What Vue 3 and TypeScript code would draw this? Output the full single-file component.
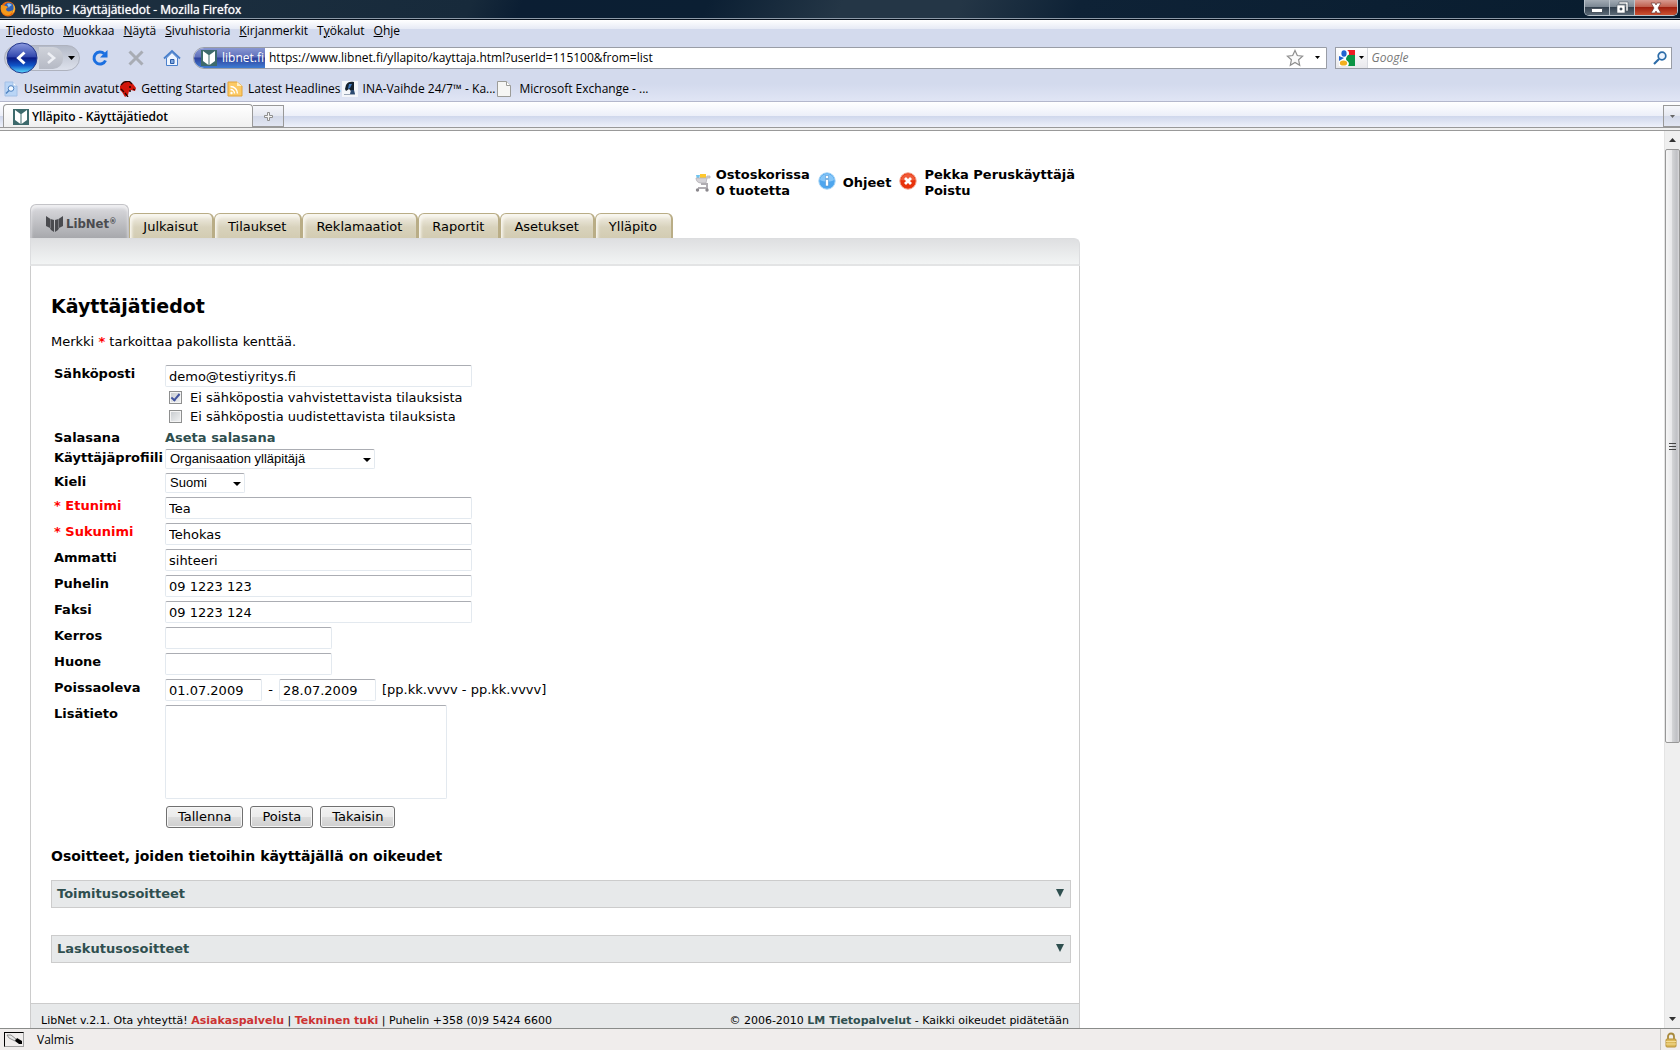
<script setup lang="ts">
import { ref } from 'vue'

interface TextField {
  id: string
  label: string
  value: string
  required?: boolean
  short?: boolean
}

const menus = [
  ['', 'T', 'iedosto'],
  ['', 'M', 'uokkaa'],
  ['', 'N', 'äytä'],
  ['', 'S', 'ivuhistoria'],
  ['', 'K', 'irjanmerkit'],
  ['T', 'y', 'ökalut'],
  ['', 'O', 'hje'],
]

const siteTabs = ['Julkaisut', 'Tilaukset', 'Reklamaatiot', 'Raportit', 'Asetukset', 'Ylläpito']

const url = ref('https://www.libnet.fi/yllapito/kayttaja.html?userId=115100&from=list')
const email = ref('demo@testiyritys.fi')
const noConfirm = ref(true)
const noRenewal = ref(false)
const absentFrom = ref('01.07.2009')
const absentTo = ref('28.07.2009')
const notes = ref('')

const fields = ref<TextField[]>([
  { id: 'etunimi', label: 'Etunimi', value: 'Tea', required: true },
  { id: 'sukunimi', label: 'Sukunimi', value: 'Tehokas', required: true },
  { id: 'ammatti', label: 'Ammatti', value: 'sihteeri' },
  { id: 'puhelin', label: 'Puhelin', value: '09 1223 123' },
  { id: 'faksi', label: 'Faksi', value: '09 1223 124' },
  { id: 'kerros', label: 'Kerros', value: '', short: true },
  { id: 'huone', label: 'Huone', value: '', short: true },
])

const addressGroups = ['Toimitusosoitteet', 'Laskutusosoitteet']
</script>

<template>
  <div class="browser">
    <header class="titlebar">
      <svg class="fox" width="16" height="16" viewBox="0 0 16 16">
        <circle cx="8" cy="8" r="7.4" fill="#e66a10" />
        <circle cx="9" cy="6.8" r="5" fill="#2f5fb4" />
        <path d="M7 3c2-1 4 0 5 1-1 1-3 1-3 3z" fill="#8fc3ee" />
        <path d="M1 4c2 0 3 1 5 1l2 1-2 2c0 3 4 3 7 1-1 4-4 6-7 5C2 13 0 9 1 4z" fill="#f49a1c" />
        <path d="M13 3c3 3 2 8-1 10 2-4 2-7 1-10z" fill="#ffd23e" />
      </svg>
      <span class="caption">Ylläpito - Käyttäjätiedot - Mozilla Firefox</span>
      <div class="winbuttons">
        <button class="win" aria-label="Pienennä">
          <svg width="14" height="14" viewBox="0 0 14 14"><rect x="1.500" y="7.500" width="11" height="4" fill="#fff" stroke="#4b5560" /></svg>
        </button>
        <button class="win" aria-label="Palauta">
          <svg width="14" height="14" viewBox="0 0 14 14">
            <path d="M4 1h9v9h-2V3H4z" fill="#fff" stroke="#4b5560" stroke-width=".6" />
            <path d="M2 4h8v8H2zM5 7v2h2V7z" fill="#fff" fill-rule="evenodd" stroke="#4b5560" stroke-width=".6" />
          </svg>
        </button>
        <button class="win close" aria-label="Sulje">
          <svg width="14" height="14" viewBox="0 0 14 14"><path d="M2 2h4l1 2 1-2h4L9 7l3 5H8l-1-2-1 2H2l3-5z" fill="#fff" stroke="#6b3a36" stroke-width=".7" /></svg>
        </button>
      </div>
    </header>

    <div class="chrome">
      <nav class="menubar">
        <button v-for="m in menus" :key="m[1]">{{ m[0] }}<u>{{ m[1] }}</u>{{ m[2] }}</button>
      </nav>

      <div class="navbar">
        <div class="keyhole">
          <button class="back" aria-label="Takaisin">
            <svg width="32" height="32" viewBox="0 0 32 32">
              <defs>
                <linearGradient id="backFill" x1="0" y1="0" x2="0" y2="1">
                  <stop offset="0" stop-color="#8c9be0" />
                  <stop offset=".45" stop-color="#3349ae" />
                  <stop offset=".5" stop-color="#0a1a85" />
                  <stop offset=".75" stop-color="#0f55c8" />
                  <stop offset="1" stop-color="#5fe0ff" />
                </linearGradient>
              </defs>
              <circle cx="16" cy="16" r="15" fill="url(#backFill)" stroke="#24388c" />
              <path d="M18.500 10.500L12.500 16l6 5.500" fill="none" stroke="#fff" stroke-width="3" />
            </svg>
          </button>
          <button class="forward" aria-label="Seuraava">
            <svg width="24" height="22" viewBox="0 0 24 22"><path d="M9 6l6 5-6 5" fill="none" stroke="#eef0f5" stroke-width="2.600" /></svg>
          </button>
          <svg class="drop" width="7" height="4" viewBox="0 0 7 4"><path d="M0 0h7L3.500 4z" /></svg>
        </div>
        <button class="tool" aria-label="Päivitä">
          <svg width="18" height="18" viewBox="0 0 18 18">
            <path d="M14.500 11.500A6 6 0 1 1 13.200 4.800" fill="none" stroke="#1b6fe0" stroke-width="3" />
            <path d="M16.500 1v7.500H9z" fill="#1b6fe0" />
          </svg>
        </button>
        <button class="tool" aria-label="Pysäytä">
          <svg width="18" height="18" viewBox="0 0 18 18"><path d="M2.500 2.500l13 13M15.500 2.500l-13 13" stroke="#a8acb4" stroke-width="3" /></svg>
        </button>
        <button class="tool home" aria-label="Koti">
          <svg width="18" height="18" viewBox="0 0 18 18">
            <path d="M3.500 9v7.500h11V9L9 3.500z" fill="#eef5ff" stroke="#4a80cc" />
            <path d="M1 9.500l8-7.500 8 7.500" fill="none" stroke="#4a80cc" stroke-width="1.800" />
            <path d="M7.500 14.500v-4h3.500v4z" fill="#7fa8e0" stroke="#2b5ba6" />
          </svg>
        </button>

        <div class="urlbar">
          <button class="identity">
            <svg width="16" height="16" viewBox="0 0 16 16"><rect width="16" height="16" fill="#3d6a6c" /><path d="M2 1l5.500 4v10L2 11zM14 1L8.500 5v10L14 11z" fill="#fff" /></svg>
            <span>libnet.fi</span>
          </button>
          <input v-model="url" class="url" type="text" aria-label="Osoite" />
          <svg width="18" height="18" viewBox="0 0 18 18"><path d="M9 1.500l2.300 5 5.300.6-4 3.700 1.100 5.500L9 13.500l-4.700 2.800 1.100-5.500-4-3.700 5.300-.6z" fill="#fafafa" stroke="#8e8e8e" stroke-width="1.200" /></svg>
          <svg class="urldrop" width="5" height="3" viewBox="0 0 5 3"><path d="M0 0h5L2.500 3z" /></svg>
        </div>

        <div class="searchbar">
          <button class="engine" aria-label="Hakukone">
            <svg width="16" height="16" viewBox="0 0 16 16">
              <rect width="16" height="16" fill="#fff" />
              <path d="M8 0h8v6H9C11 4 10 1 8 0z" fill="#ee1c23" />
              <path d="M9 5h7v11H9c3-4-2-5-2-7 0-1 1-3 2-4z" fill="#0b9444" />
              <ellipse cx="5" cy="3.500" rx="2.600" ry="3.300" fill="#2163d0" />
              <path d="M0 6l5 2-5 3z" fill="#2163d0" />
              <ellipse cx="4.500" cy="13" rx="3.700" ry="2.600" fill="#f2b01e" />
            </svg>
            <svg width="5" height="3" viewBox="0 0 5 3"><path d="M0 0h5L2.500 3z" /></svg>
          </button>
          <input class="search" type="text" placeholder="Google" aria-label="Haku" />
          <svg width="14" height="14" viewBox="0 0 14 14"><circle cx="9" cy="5" r="3.800" fill="#eef5ff" stroke="#2c6ca8" stroke-width="1.700" /><path d="M6 8l-5 5" stroke="#2c6ca8" stroke-width="2.200" /></svg>
        </div>
      </div>

      <nav class="bookmarks">
        <a href="#">
          <svg width="16" height="16" viewBox="0 0 16 16"><path d="M2 1h8l4 4v10H2z" fill="#b9d5f6" stroke="#a3c0e6" /><path d="M10 1v4h4" fill="#fff" stroke="#a3c0e6" /><circle cx="8" cy="7.500" r="2.800" fill="#f4f9ff" stroke="#4e82c0" /><path d="M6 9.500l-3 3" stroke="#4e82c0" stroke-width="1.500" /></svg>
          <span>Useimmin avatut</span>
        </a>
        <a href="#">
          <svg width="16" height="16" viewBox="0 0 16 16"><path d="M0 5l3-4 6-1 4 3 3 4-1 3-4-1-2 1-1 4-3 2-3-5-2-2z" fill="#d3160c" /><path d="M1 4l3-3 5-1 3 3M9 6l2 0M13 8l2 1M5 12l3 4M1 8l3 3M9 10l2 0" fill="none" stroke="#2a0603" stroke-width="1.300" /></svg>
          <span>Getting Started</span>
        </a>
        <a href="#">
          <svg width="16" height="16" viewBox="0 0 16 16"><path d="M1 1h9l5 4v10H1z" fill="#fbc964" stroke="#e2a33a" /><path d="M10 1v4h5" fill="#fff0c8" /><circle cx="4.500" cy="12" r="1.200" fill="#fff" /><path d="M3.500 8.500a4 4 0 0 1 4 4M3.500 5.500a7 7 0 0 1 7 7" fill="none" stroke="#fff" stroke-width="1.400" /></svg>
          <span>Latest Headlines</span>
        </a>
        <a href="#">
          <svg width="16" height="16" viewBox="0 0 16 16"><rect width="16" height="16" fill="#f4f6fa" /><path d="M4 4c1-3 5-4 8-3l0 9h-3l-2-2-3 2-1-2z" fill="#14202e" /><path d="M7 3l3 0-2 4-2 1z" fill="#3e79c0" /><path d="M9 9h3l1 4H8z" fill="#2c4a70" /><path d="M2 13h11v1H2z" fill="#9aa6b6" /></svg>
          <span>INA-Vaihde 24/7™ - Ka...</span>
        </a>
        <a href="#" class="plain">
          <svg width="14" height="16" viewBox="0 0 14 16"><path d="M.5.500h9l4 4v11H.5z" fill="#f6f6f4" stroke="#9c9c98" /><path d="M9.500.500v4h4" fill="#fff" stroke="#9c9c98" /></svg>
          <span>Microsoft Exchange - ...</span>
        </a>
      </nav>
    </div>

    <div class="tabstrip">
      <button class="browsertab">
        <svg width="16" height="16" viewBox="0 0 16 16"><rect width="16" height="16" fill="#3d6a6c" /><path d="M2 1l5.500 4v10L2 11zM14 1L8.500 5v10L14 11z" fill="#fff" /></svg>
        <span>Ylläpito - Käyttäjätiedot</span>
      </button>
      <button class="newtab" aria-label="Uusi välilehti">
        <svg width="9" height="9" viewBox="0 0 9 9"><path d="M3.500.500h2v3h3v2h-3v3h-2v-3h-3v-2h3z" fill="#f4f4f4" stroke="#8e8e8e" /></svg>
      </button>
      <button class="alltabs" aria-label="Kaikki välilehdet">
        <svg width="5" height="3" viewBox="0 0 5 3"><path d="M0 0h5L2.500 3z" fill="#666" /></svg>
      </button>
    </div>

    <div class="viewport">
      <main class="page">
        <div class="site">
          <div class="tools">
            <a href="#" class="toollink">
              <svg width="18" height="20" viewBox="0 0 18 20">
                <path d="M2 2h4l-1 4H3z" fill="#6fc4ef" /><path d="M6 1h6v4H6z" fill="#ffc82e" />
                <path d="M2 5c0 3 2 5 5 5h5l1-5 3 0V3h-3l-1 2z" fill="#d4d2d6" stroke="#b4b1b6" stroke-width=".8" />
                <path d="M7 11h6l0 4H4" fill="none" stroke="#b0adb2" stroke-width="2" />
                <circle cx="3.500" cy="17" r="1.700" fill="#8a878c" /><circle cx="13" cy="17" r="1.700" fill="#8a878c" />
              </svg>
              <span>Ostoskorissa<br />0 tuotetta</span>
            </a>
            <a href="#" class="toollink help">
              <svg width="18" height="18" viewBox="0 0 18 18">
                <circle cx="9" cy="9" r="8.200" fill="#4ea6ee" stroke="#a6d4f6" /><path d="M2 8a7 6 0 0 1 14 0c-3 2-10 2-14 0z" fill="#86c6f8" />
                <path d="M7.500 7.500h3V14h-3zM7.500 3.500h3v3h-3z" fill="#fff" stroke="#3c86c8" stroke-width=".5" />
              </svg>
              <span>Ohjeet</span>
            </a>
            <a href="#" class="toollink user">
              <svg width="18" height="18" viewBox="0 0 18 18">
                <circle cx="9" cy="9" r="8.200" fill="#e8320a" stroke="#f2a48e" /><path d="M2 8a7 6 0 0 1 14 0c-3 1-10 1-14 0z" fill="#f05a38" />
                <path d="M6 6l6 6M12 6l-6 6" stroke="#fff" stroke-width="2.800" />
              </svg>
              <span>Pekka Peruskäyttäjä<br />Poistu</span>
            </a>
          </div>

          <nav class="sitetabs">
            <a href="#" class="brand">
              <svg width="17" height="18" viewBox="0 0 17 18"><path d="M0 1l4.500 3 3.500 1v12l-3-2-1-2-4-2zM17 1l-4.500 3L9 5v12l3-2 1-2 4-2z" fill="#4a4b4f" /><path d="M4.500 4v9M12.500 4v9" stroke="#9a9b9f" stroke-width=".6" /></svg>
              <span>LibNet<sup>®</sup></span>
            </a>
            <a v-for="t in siteTabs" :key="t" href="#" class="sitetab">{{ t }}</a>
          </nav>
          <div class="band"></div>

          <div class="panel">
            <section class="content">
              <h1>Käyttäjätiedot</h1>
              <p class="hint">Merkki <b>*</b> tarkoittaa pakollista kenttää.</p>

              <form class="form" @submit.prevent>
                <div class="row email">
                  <label for="email">Sähköposti</label>
                  <div class="stack">
                    <input id="email" v-model="email" type="text" class="text" />
                    <label class="check"><input v-model="noConfirm" type="checkbox" /><span>Ei sähköpostia vahvistettavista tilauksista</span></label>
                    <label class="check"><input v-model="noRenewal" type="checkbox" /><span>Ei sähköpostia uudistettavista tilauksista</span></label>
                  </div>
                </div>
                <div class="row password">
                  <span class="name">Salasana</span>
                  <a href="#">Aseta salasana</a>
                </div>
                <div class="row">
                  <label for="profiili">Käyttäjäprofiili</label>
                  <span class="select wide"><select id="profiili"><option>Organisaation ylläpitäjä</option></select></span>
                </div>
                <div class="row">
                  <label for="kieli">Kieli</label>
                  <span class="select"><select id="kieli"><option>Suomi</option></select></span>
                </div>
                <div v-for="f in fields" :key="f.id" class="row">
                  <label :for="f.id" :class="{ required: f.required }">{{ f.required ? '* ' : '' }}{{ f.label }}</label>
                  <input :id="f.id" v-model="f.value" type="text" class="text" :class="{ short: f.short }" />
                </div>
                <div class="row">
                  <label for="poissa">Poissaoleva</label>
                  <div class="dates">
                    <input id="poissa" v-model="absentFrom" type="text" class="text date" />
                    <span class="dash">-</span>
                    <input v-model="absentTo" type="text" class="text date" aria-label="Poissaolo päättyy" />
                    <span class="format">[pp.kk.vvvv - pp.kk.vvvv]</span>
                  </div>
                </div>
                <div class="row">
                  <label for="lisatieto">Lisätieto</label>
                  <textarea id="lisatieto" v-model="notes"></textarea>
                </div>
                <div class="actions">
                  <button type="submit">Tallenna</button>
                  <button type="button">Poista</button>
                  <button type="button">Takaisin</button>
                </div>
              </form>

              <h2>Osoitteet, joiden tietoihin käyttäjällä on oikeudet</h2>
              <button v-for="g in addressGroups" :key="g" class="group">
                <span>{{ g }}</span>
                <svg width="8" height="8" viewBox="0 0 8 8"><path d="M0 0h8L4 8z" fill="#2f4f4f" /></svg>
              </button>
            </section>

            <footer class="foot">
              <span>LibNet v.2.1. Ota yhteyttä! <a href="#" class="red">Asiakaspalvelu</a> | <a href="#" class="red">Tekninen tuki</a> | Puhelin +358 (0)9 5424 6600</span>
              <span>© 2006-2010 <a href="#">LM Tietopalvelut</a> - Kaikki oikeudet pidätetään</span>
            </footer>
          </div>
        </div>
      </main>

      <div class="scrollbar">
        <div class="arrow"><svg width="7" height="4" viewBox="0 0 7 4"><path d="M0 4h7L3.500 0z" fill="#333" /></svg></div>
        <div class="track">
          <div class="thumb"><i></i><i></i><i></i></div>
        </div>
        <div class="arrow"><svg width="7" height="4" viewBox="0 0 7 4"><path d="M0 0h7L3.500 4z" fill="#333" /></svg></div>
      </div>
    </div>

    <div class="statusbar">
      <div class="pen">
        <svg width="18" height="12" viewBox="0 0 18 12"><path d="M2 2l4 0 5 4-1 2-6-3z" fill="#e6e6e6" stroke="#777" stroke-width=".8" /><path d="M10 8l2-3 5 3v3h-3z" /></svg>
      </div>
      <span class="status">Valmis</span>
      <div class="lock">
        <svg width="12" height="16" viewBox="0 0 12 16"><path d="M3 8V4.500a3 3 0 0 1 6 0V8" fill="none" stroke="#a8893c" stroke-width="1.800" /><rect x="1" y="7" width="10" height="8" rx="1" fill="#dcb95a" stroke="#b8923a" /><path d="M1 9.500h10M1 12h10" stroke="#f4dc94" /></svg>
      </div>
    </div>
  </div>
</template>

<style>
body {
  margin: 0;
  background: #fff;
}
</style>

<style scoped>
.browser {
  display: flex;
  flex-direction: column;
  height: 100vh;
  overflow: hidden;
  font: 12px/16px "Open Sans", "Noto Sans", sans-serif;
  color: #000;
}
.browser *,
.browser *::before,
.browser *::after {
  box-sizing: border-box;
}
svg {
  display: block;
  flex: none;
}
button {
  font: inherit;
  color: inherit;
  margin: 0;
  padding: 0;
  border: 0;
  background: none;
}
a {
  color: inherit;
  text-decoration: none;
}

/* window frame */
.titlebar {
  flex: none;
  display: flex;
  align-items: flex-start;
  height: 20px;
  border-bottom: 1px solid #06101c;
  box-shadow: inset 0 -1px #8d9aa8;
  background: linear-gradient(115deg, #1d3040 0, #172a3b 28%, #0b1e33 31%, #0b1f33 42%, #243646 50%, #243646 57%, #0e2236 64%, #081c2e 100%);
}
.fox {
  margin: 1px 5px 0 0;
}
.caption {
  flex: 1;
  line-height: 19px;
  color: #fff;
  text-shadow: 0 0 1px #fff;
}
.winbuttons {
  display: flex;
  height: 16px;
  margin-right: 2px;
  border: 1px solid #b9c2ca;
  border-top: 0;
  border-radius: 0 0 5px 5px;
  overflow: hidden;
}
.win {
  display: flex;
  align-items: center;
  justify-content: center;
  width: 25px;
  border-right: 1px solid #b9c2ca;
  background: linear-gradient(#a2abb4 0, #7c8894 45%, #33414f 50%, #5c6a77 100%);
}
.win.close {
  width: 42px;
  border-right: 0;
  background: linear-gradient(#d79a90 0, #c0604f 45%, #a02010 50%, #cc5232 100%);
}

/* toolbars */
.chrome {
  flex: none;
  border-bottom: 1px solid #b3b7cc;
  background: linear-gradient(#fff 0, #e6eaf5 9px, #d3daed 9px, #d3daed 64px, #e0e5f5 100%);
}
.menubar {
  display: flex;
  gap: 9px;
  height: 21px;
  padding: 0 6px;
}
.navbar {
  display: flex;
  align-items: center;
  height: 33px;
  padding: 0 8px 0 4px;
}
.keyhole {
  display: flex;
  align-items: center;
  width: 76px;
  height: 26px;
  margin-right: 11px;
  padding-left: 1px;
  border: 1px solid #aeb2be;
  border-radius: 13px;
  background: linear-gradient(#b4bac8, #dde1ec);
}
.forward {
  margin: 0 5px 0 1px;
  border-radius: 0 10px 10px 0;
  background: linear-gradient(#cfd2da, #b6bac5);
}
.tool {
  width: 18px;
  margin-right: 18px;
}
.tool.home {
  margin-right: 12px;
}
.urlbar {
  flex: 1137;
  display: flex;
  align-items: center;
  height: 22px;
  margin-right: 8px;
  border: 1px solid #999da6;
  border-radius: 11px 0 0 11px;
  background: #fff;
}
.identity {
  display: flex;
  align-items: center;
  gap: 5px;
  height: 20px;
  padding: 0 1px 0 7px;
  border-radius: 10px 0 0 10px;
  color: #fff;
  background: linear-gradient(#8896d2 0, #5f70bb 45%, #2f419c 50%, #3f7cd2 100%);
}
.url,
.search {
  flex: 1;
  min-width: 0;
  height: 20px;
  padding: 0 4px;
  border: 0;
  outline: 0;
  background: none;
  font: inherit;
}
.urldrop {
  margin: 0 6px 0 11px;
}
.searchbar {
  flex: 333;
  display: flex;
  align-items: center;
  height: 22px;
  padding-right: 4px;
  border: 1px solid #999da6;
  background: #fff;
}
.engine {
  display: flex;
  align-items: center;
  gap: 4px;
  height: 20px;
  padding: 0 3px;
  border-right: 1px solid #d8dae0;
  background: linear-gradient(#fff, #e8e8ec);
}
.search::placeholder {
  color: #777;
  opacity: 1;
  font-style: italic;
}
.bookmarks {
  display: flex;
  gap: 1px;
  height: 27px;
  padding: 0 3px;
}
.bookmarks a {
  display: flex;
  align-items: center;
  gap: 5px;
  height: 30px;
}
.bookmarks .plain {
  gap: 9px;
}
.tabstrip {
  flex: none;
  display: flex;
  align-items: flex-end;
  height: 29px;
  padding: 3px 0 3px 3px;
  border-bottom: 1px solid #999;
  background: linear-gradient(#fff 0, #eceff9 14px, #cfd7ec 14px, #eef1fa 25px, #999 25px, #999 26px, #f0f0f0 26px);
}
.browsertab {
  display: flex;
  align-items: center;
  gap: 3px;
  width: 250px;
  height: 23px;
  padding: 2px 9px 0;
  border: 1px solid #999;
  border-bottom: 0;
  border-radius: 4px 4px 0 0;
  font-weight: 600;
  background: linear-gradient(#fff, #f0f0f0);
}
.newtab,
.alltabs {
  display: flex;
  align-items: center;
  justify-content: center;
  width: 31px;
  height: 22px;
  border: 1px solid #999;
  border-left: 0;
  background: linear-gradient(#f6f7fb 0, #e4e7f0 50%, #d2d8e8 50%, #e2e6f2 100%);
}
.alltabs {
  width: 17px;
  margin-left: auto;
  border-left: 1px solid #999;
  border-right: 0;
}

/* page */
.viewport {
  flex: 1;
  min-height: 0;
  display: flex;
}
.page {
  flex: 1;
  min-width: 0;
  overflow: hidden;
  font: 13px/16px "DejaVu Sans", Verdana, sans-serif;
}
.site {
  max-width: 1050px;
  margin: 0 30px;
}
.tools {
  display: flex;
  justify-content: flex-end;
  align-items: center;
  height: 73px;
  padding: 30px 5px 0 0;
  font-weight: 700;
}
.toollink {
  display: flex;
  align-items: center;
  gap: 4px;
}
.help,
.user {
  gap: 7px;
  margin-left: 8px;
}
.help svg,
.user svg {
  margin-bottom: 3px;
}
.sitetabs {
  display: flex;
  align-items: flex-end;
  height: 34px;
}
.brand {
  display: flex;
  align-items: center;
  gap: 3px;
  height: 34px;
  padding: 4px 12px 0 15px;
  border: 1px solid #c4c4c8;
  border-bottom: 0;
  border-radius: 6px 6px 0 0;
  box-shadow: inset 0 3px 3px #efeff1;
  background: linear-gradient(#dcdce0, #a7a8ac);
  color: #4a4b4f;
  font: 700 13px/16px "DejaVu Sans Condensed", "DejaVu Sans", sans-serif;
}
.brand sup {
  font-size: 8px;
  line-height: 8px;
  vertical-align: 4px;
}
.sitetab {
  height: 25px;
  padding: 5px 14px 0 13px;
  border: 1px solid #b9ad86;
  border-bottom: 0;
  border-right-width: 2px;
  border-radius: 6px 6px 0 0;
  box-shadow: inset 2px 3px 3px #f8f6ef;
  background: linear-gradient(#f4f1e8 0, #d8d2bc 55%, #d3ccb2 100%);
}
.band {
  height: 28px;
  border: 1px solid #dcdddf;
  border-bottom: 2px solid #e3e4e5;
  border-radius: 0 6px 0 0;
  background: linear-gradient(#dedfe1, #f2f4f4);
}
.panel {
  border: solid #ccc;
  border-width: 0 1px;
}
.content {
  padding: 28px 8px 13px 20px;
}
h1 {
  margin: 0 0 16px;
  font-size: 19px;
  line-height: 24px;
}
.hint {
  margin: 0 0 15px;
}
.hint b {
  color: #f00;
}
.row {
  display: flex;
  align-items: flex-start;
  margin-bottom: 4px;
  padding-left: 3px;
}
.row > label,
.row > .name {
  width: 111px;
  line-height: 18px;
  font-weight: 700;
  white-space: nowrap;
}
.row > .required {
  color: #f00;
}
.email {
  margin-bottom: 3px;
}
.stack {
  display: flex;
  flex-direction: column;
}
.stack .text {
  margin-bottom: 1px;
}
.text {
  display: block;
  width: 307px;
  height: 22px;
  padding: 1px 3px 0;
  border: 1px solid #e3e9ef;
  border-top-color: #abadb3;
  border-radius: 2px;
  outline: 0;
  background: #fff;
  color: #000;
  font: inherit;
}
.text.short {
  width: 167px;
}
.text.date {
  width: 97px;
}
.check {
  display: flex;
  align-items: center;
  gap: 8px;
  height: 19px;
  padding-left: 4px;
}
.check input {
  appearance: none;
  display: grid;
  width: 13px;
  height: 13px;
  margin: 0;
  border: 1px solid #8e8f8f;
  box-shadow: inset 0 0 0 1px #f4f4f4;
  background: linear-gradient(135deg, #c6cace, #f2f3f4);
}
.check input:checked::before {
  content: "";
  width: 5px;
  height: 9px;
  margin: 0 0 0 3px;
  border: solid #42549f;
  border-width: 0 2px 2px 0;
  transform: rotate(40deg);
}
.password {
  height: 18px;
  margin-bottom: 2px;
}
.password a {
  line-height: 18px;
  font-weight: 700;
  color: #2f4f4f;
}
.select {
  position: relative;
  width: 80px;
}
.select.wide {
  width: 210px;
}
.select select {
  appearance: none;
  display: block;
  width: 100%;
  height: 20px;
  padding: 0 4px;
  border: 1px solid #e3e9ef;
  border-top-color: #abadb3;
  border-radius: 2px;
  background: #fff;
  color: #000;
  font: 13px/18px "Liberation Sans", Arial, sans-serif;
}
.select::after {
  content: "";
  position: absolute;
  top: 9px;
  right: 4px;
  border: solid transparent;
  border-width: 4px 4px 0;
  border-top-color: #000;
  pointer-events: none;
}
.dates {
  display: flex;
  align-items: center;
}
.dash {
  width: 17px;
  text-align: center;
}
.format {
  margin-left: 6px;
}
textarea {
  display: block;
  width: 282px;
  height: 94px;
  border: 1px solid #e3e9ef;
  border-top-color: #abadb3;
  border-radius: 2px;
  outline: 0;
  resize: none;
  font: inherit;
}
.actions {
  display: flex;
  gap: 7px;
  margin: 7px 0 0 115px;
}
.actions button {
  height: 22px;
  padding: 0 11px;
  border: 1px solid #707070;
  border-radius: 3px;
  box-shadow: inset 0 0 0 1px #f6f6f6;
  background: linear-gradient(#f2f2f2 0, #ebebeb 50%, #ddd 50%, #cfcfcf 100%);
}
h2 {
  margin: 18px 0 14px;
  font-size: 14px;
  line-height: 20px;
}
.group {
  display: flex;
  justify-content: space-between;
  align-items: flex-start;
  width: 100%;
  height: 28px;
  margin-bottom: 27px;
  padding: 5px 6px 5px 5px;
  border: 1px solid #ccc;
  background: #e7e9ea;
  color: #2f4f4f;
  font-weight: 700;
}
.group svg {
  margin-top: 3px;
}
.foot {
  display: flex;
  justify-content: space-between;
  padding: 9px 10px 20px;
  border-top: 1px solid #ccc;
  background: #e7e9ea;
  font-size: 11px;
}
.foot a {
  color: #2f4f4f;
  font-weight: 700;
}
.foot .red {
  color: #c33;
}

/* scrollbar */
.scrollbar {
  flex: none;
  display: flex;
  flex-direction: column;
  width: 16px;
  border-left: 1px solid #e4e4e4;
  background: #efefef;
}
.arrow {
  display: flex;
  align-items: center;
  justify-content: center;
  height: 18px;
}
.track {
  flex: 1;
}
.thumb {
  display: flex;
  flex-direction: column;
  align-items: center;
  justify-content: center;
  gap: 2px;
  height: 69%;
  border: 1px solid #979797;
  border-radius: 2px;
  background: linear-gradient(90deg, #f6f6f6 0, #e8e8ea 45%, #d2d3d5 50%, #bfc0c4 85%, #dcdcde 100%);
}
.thumb i {
  width: 7px;
  height: 1px;
  background: #444;
}

/* status bar */
.statusbar {
  flex: none;
  display: flex;
  align-items: center;
  height: 22px;
  padding-left: 4px;
  border-top: 1px solid #8a8c8a;
  background: #f0edec;
}
.pen {
  width: 20px;
  height: 15px;
  border: 1px solid #a0a0a0;
  border-top-color: #000;
  border-left-color: #000;
}
.status {
  flex: 1;
  padding-left: 13px;
}
.lock {
  display: flex;
  align-items: center;
  justify-content: center;
  width: 20px;
  height: 21px;
  border-left: 1px solid #c8c6c4;
}
</style>
